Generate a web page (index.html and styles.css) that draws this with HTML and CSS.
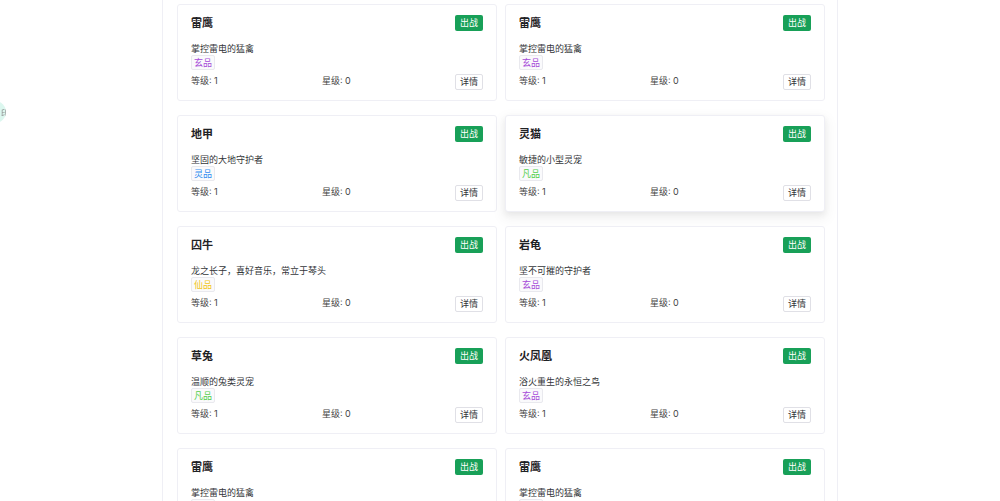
FILE: index.html
```html
<!DOCTYPE html>
<html lang="zh">
<head>
<meta charset="utf-8">
<title>灵宠</title>
<link rel="stylesheet" href="styles.css">
</head>
<body>
<div class="float-btn"><span class="float-glyph">印</span></div>
<main class="page">
  <div class="grid">
    <div class="card">
      <div class="card-head"><span class="title">雷鹰</span><button class="btn-go">出战</button></div>
      <div class="desc">掌控雷电的猛禽</div>
      <span class="tag tag-xuan">玄品</span>
      <div class="card-foot"><span class="stat">等级: 1</span><span class="stat">星级: 0</span><button class="btn-detail">详情</button></div>
    </div>
    <div class="card">
      <div class="card-head"><span class="title">雷鹰</span><button class="btn-go">出战</button></div>
      <div class="desc">掌控雷电的猛禽</div>
      <span class="tag tag-xuan">玄品</span>
      <div class="card-foot"><span class="stat">等级: 1</span><span class="stat">星级: 0</span><button class="btn-detail">详情</button></div>
    </div>
    <div class="card">
      <div class="card-head"><span class="title">地甲</span><button class="btn-go">出战</button></div>
      <div class="desc">坚固的大地守护者</div>
      <span class="tag tag-ling">灵品</span>
      <div class="card-foot"><span class="stat">等级: 1</span><span class="stat">星级: 0</span><button class="btn-detail">详情</button></div>
    </div>
    <div class="card is-hover">
      <div class="card-head"><span class="title">灵猫</span><button class="btn-go">出战</button></div>
      <div class="desc">敏捷的小型灵宠</div>
      <span class="tag tag-fan">凡品</span>
      <div class="card-foot"><span class="stat">等级: 1</span><span class="stat">星级: 0</span><button class="btn-detail">详情</button></div>
    </div>
    <div class="card">
      <div class="card-head"><span class="title">囚牛</span><button class="btn-go">出战</button></div>
      <div class="desc">龙之长子，喜好音乐，常立于琴头</div>
      <span class="tag tag-xian">仙品</span>
      <div class="card-foot"><span class="stat">等级: 1</span><span class="stat">星级: 0</span><button class="btn-detail">详情</button></div>
    </div>
    <div class="card">
      <div class="card-head"><span class="title">岩龟</span><button class="btn-go">出战</button></div>
      <div class="desc">坚不可摧的守护者</div>
      <span class="tag tag-xuan">玄品</span>
      <div class="card-foot"><span class="stat">等级: 1</span><span class="stat">星级: 0</span><button class="btn-detail">详情</button></div>
    </div>
    <div class="card">
      <div class="card-head"><span class="title">草兔</span><button class="btn-go">出战</button></div>
      <div class="desc">温顺的兔类灵宠</div>
      <span class="tag tag-fan">凡品</span>
      <div class="card-foot"><span class="stat">等级: 1</span><span class="stat">星级: 0</span><button class="btn-detail">详情</button></div>
    </div>
    <div class="card">
      <div class="card-head"><span class="title">火凤凰</span><button class="btn-go">出战</button></div>
      <div class="desc">浴火重生的永恒之鸟</div>
      <span class="tag tag-xuan">玄品</span>
      <div class="card-foot"><span class="stat">等级: 1</span><span class="stat">星级: 0</span><button class="btn-detail">详情</button></div>
    </div>
    <div class="card">
      <div class="card-head"><span class="title">雷鹰</span><button class="btn-go">出战</button></div>
      <div class="desc">掌控雷电的猛禽</div>
      <span class="tag tag-xuan">玄品</span>
      <div class="card-foot"><span class="stat">等级: 1</span><span class="stat">星级: 0</span><button class="btn-detail">详情</button></div>
    </div>
    <div class="card">
      <div class="card-head"><span class="title">雷鹰</span><button class="btn-go">出战</button></div>
      <div class="desc">掌控雷电的猛禽</div>
      <span class="tag tag-xuan">玄品</span>
      <div class="card-foot"><span class="stat">等级: 1</span><span class="stat">星级: 0</span><button class="btn-detail">详情</button></div>
    </div>
  </div>
</main>
</body>
</html>
```
FILE: styles.css
```css
html, body {
  margin: 0;
  padding: 0;
  background: #ffffff;
  height: 100%;
  overflow: hidden;
}
body {
  font-family: "Inter", "Noto Sans CJK SC", "Noto Sans", sans-serif;
  color: #333639;
}
.page {
  width: 674px;
  margin: 0 auto;
  min-height: 100vh;
  border-left: 1px solid #efeff5;
  border-right: 1px solid #efeff5;
  box-sizing: content-box;
}
.grid {
  display: grid;
  grid-template-columns: 320px 320px;
  column-gap: 8px;
  row-gap: 14px;
  padding: 4px 12px 0 14px;
}
.card {
  border: 1px solid #efeff5;
  border-radius: 3px;
  background: #fff;
  padding: 10px 13px 10px 13px;
  height: 97px;
  box-sizing: border-box;
  display: flex;
  flex-direction: column;
  align-items: flex-start;
}
.card.is-hover {
  box-shadow: 0 1px 2px -2px rgba(0,0,0,.08), 0 3px 6px 0 rgba(0,0,0,.06), 0 5px 12px 4px rgba(0,0,0,.04);
}
.card-head {
  display: flex;
  justify-content: space-between;
  align-items: center;
  width: 100%;
  height: 16px;
}
.title {
  font-size: 11px;
  font-weight: 700;
  color: #1f2225;
  line-height: 16px;
}
.btn-go {
  font-family: inherit;
  height: 16px;
  padding: 0 5px;
  border: none;
  border-radius: 2px;
  background: #18a058;
  color: #fff;
  font-size: 9px;
  line-height: 16px;
  cursor: pointer;
}
.desc {
  margin-top: 11px;
  font-size: 9px;
  line-height: 13px;
  color: #333639;
}
.tag {
  display: inline-flex;
  align-items: center;
  height: 15px;
  box-sizing: border-box;
  padding: 0 2px;
  border: 1px solid #e9e9ee;
  border-radius: 2px;
  background: #fafafc;
  font-size: 9px;
  line-height: 13px;
}
.tag-xuan { color: #a64ad8; }
.tag-ling { color: #2f8cf0; }
.tag-fan { color: #52cf4a; }
.tag-xian { color: #f2c516; }
.card-foot {
  margin-top: 4px;
  width: 100%;
  display: flex;
  justify-content: space-between;
  align-items: flex-start;
}
.stat {
  font-size: 9px;
  line-height: 13px;
  color: #444;
}
.btn-detail {
  font-family: inherit;
  height: 16px;
  padding: 0 4px;
  border: 1px solid #e0e0e6;
  border-radius: 2px;
  background: #fff;
  color: #333639;
  font-size: 9px;
  line-height: 14px;
  cursor: pointer;
}
.float-btn {
  position: fixed;
  left: -16px;
  top: 101px;
  width: 22px;
  height: 22px;
  border-radius: 50%;
  background: #dcf7ef;
  display: flex;
  align-items: center;
  justify-content: flex-end;
  overflow: hidden;
}
.float-glyph {
  font-size: 8px;
  color: #8a8a8a;
  margin-right: -3px;
}
```
